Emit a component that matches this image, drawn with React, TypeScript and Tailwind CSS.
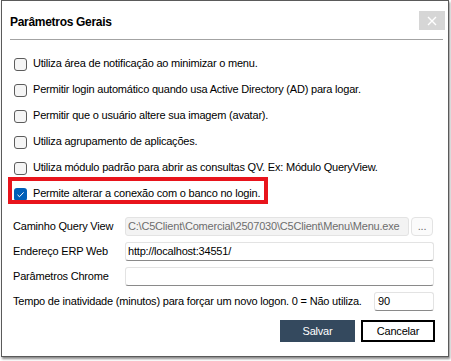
import React from "react";

const options = [
  { label: "Utiliza área de notificação ao minimizar o menu.", checked: false },
  { label: "Permitir login automático quando usa Active Directory (AD) para logar.", checked: false },
  { label: "Permitir que o usuário altere sua imagem (avatar).", checked: false },
  { label: "Utiliza agrupamento de aplicações.", checked: false },
  { label: "Utiliza módulo padrão para abrir as consultas QV. Ex: Módulo QueryView.", checked: false },
  { label: "Permite alterar a conexão com o banco no login.", checked: true, highlight: true },
];

function CheckBox({ checked }: { checked: boolean }) {
  if (checked) {
    return (
      <span className="w-[13px] h-[13px] rounded-[3px] bg-[#005fb8] flex items-center justify-center shrink-0">
        <svg width="9" height="9" viewBox="0 0 9 9" fill="none">
          <path d="M1.5 4.8 L3.5 6.7 L7.6 2.4" stroke="#ffffff" strokeWidth="1" />
        </svg>
      </span>
    );
  }
  return (
    <span className="w-[13px] h-[13px] rounded-[3px] border border-[#5c5c5c] bg-[#f5f5f5] shrink-0" />
  );
}

export default function App() {
  return (
    <div
      className="w-[451px] h-[361px] bg-white text-black text-[11px] tracking-[-0.2px]"
      style={{ fontFamily: '"Liberation Sans", Arial, sans-serif' }}
    >
      <div className="ml-[1px] w-[448px] h-[357px] border border-[#5a5a5a] bg-white flex flex-col shadow-[1px_2px_2px_rgba(0,0,0,0.45)]">
        {/* Title bar */}
        <div className="h-[38px] flex items-center justify-between pl-[8px] pr-[3px]">
          <span className="text-[12px] font-bold tracking-[-0.3px] mt-[3px]">Parâmetros Gerais</span>
          <div className="w-[26px] h-[19px] bg-[#d6d6d6] flex items-center justify-center mt-[1px]">
            <svg width="10" height="10" viewBox="0 0 10 10">
              <path d="M1 1 L9 9 M9 1 L1 9" stroke="#ffffff" strokeWidth="1.4" />
            </svg>
          </div>
        </div>
        <div className="h-px bg-[#a3a3a3] ml-[8px] mr-[5px]" />

        {/* Options */}
        <div className="flex flex-col mt-[11px]">
          {options.map((opt, idx) => (
            <div key={idx} className="relative h-[26px] flex items-center pl-[12px] gap-[6px]">
              <CheckBox checked={opt.checked} />
              <span className="mb-[2px]">{opt.label}</span>
              {opt.highlight && (
                <div className="absolute top-[-4px] left-[6px] w-[260px] h-[27px] border-4 border-[#e8141c]" />
              )}
            </div>
          ))}
        </div>

        {/* Fields */}
        <div className="flex flex-col gap-[6px] mt-[10px] pl-[11px]">
          <div className="flex items-center h-[19px]">
            <span className="w-[112px] shrink-0">Caminho Query View</span>
            <div className="w-[284px] h-[19px] border border-[#e3e3e3] bg-[#f3f3f3] rounded-[3px] text-[#6d6d6d] px-[2px] flex items-center overflow-hidden whitespace-nowrap">
              C:\C5Client\Comercial\2507030\C5Client\Menu\Menu.exe
            </div>
            <div className="ml-[2px] w-[22px] h-[19px] border border-[#e3e3e3] bg-[#fbfbfb] rounded-[4px] text-[#6d6d6d] flex items-center justify-center">
              ...
            </div>
          </div>
          <div className="flex items-center h-[19px]">
            <span className="w-[112px] shrink-0">Endereço ERP Web</span>
            <div className="w-[309px] h-[19px] border border-[#e3e3e3] border-b-[#8a8a8a] bg-white rounded-[3px] px-[2px] flex items-center">
              http://localhost:34551/
            </div>
          </div>
          <div className="flex items-center h-[19px]">
            <span className="w-[112px] shrink-0">Parâmetros Chrome</span>
            <div className="w-[309px] h-[19px] border border-[#e3e3e3] border-b-[#8a8a8a] bg-white rounded-[3px]" />
          </div>
          <div className="flex items-center h-[19px]">
            <span className="w-[361px] shrink-0">
              Tempo de inatividade (minutos) para forçar um novo logon. 0 = Não utiliza.
            </span>
            <div className="w-[60px] h-[19px] border border-[#e3e3e3] border-b-[#8a8a8a] bg-white rounded-[3px] px-[3px] flex items-center">
              90
            </div>
          </div>
        </div>

        {/* Buttons */}
        <div className="flex justify-end gap-[6px] mt-[9px] pr-[13px]">
          <div className="w-[75px] h-[22px] bg-[#34495e] text-white flex items-center justify-center">
            Salvar
          </div>
          <div className="w-[74px] h-[22px] border-2 border-black bg-white flex items-center justify-center">
            Cancelar
          </div>
        </div>
      </div>
    </div>
  );
}
